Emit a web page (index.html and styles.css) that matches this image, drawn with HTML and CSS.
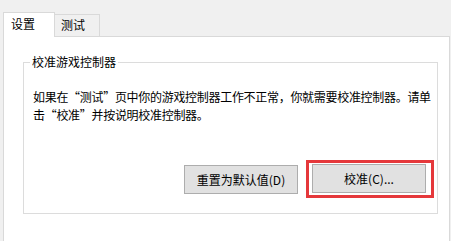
FILE: index.html
```html
<!DOCTYPE html>
<html lang="zh-CN">
<head>
<meta charset="utf-8">
<link rel="stylesheet" href="styles.css">
</head>
<body>
<div class="window">
  <div class="tabs">
    <div class="tab active">设置</div>
    <div class="tab">测试</div>
  </div>
  <div class="panel">
    <fieldset class="group">
      <legend class="group-title">校准游戏控制器</legend>
      <p class="desc">如果在“测试”页中你的游戏控制器工作不正常，你就需要校准控制器。请单<br>击“校准”并按说明校准控制器。</p>
      <div class="actions">
        <button class="btn btn-reset" type="button">重置为默认值(D)</button>
        <div class="highlight">
          <button class="btn" type="button">校准(C)...</button>
        </div>
      </div>
    </fieldset>
  </div>
</div>
</body>
</html>
```
FILE: styles.css
```css
html, body {
  margin: 0;
  padding: 0;
  background: #f0f0f0;
  width: 451px;
  height: 241px;
  overflow: hidden;
}
body {
  font-family: "Noto Sans CJK SC", "Microsoft YaHei", sans-serif;
  font-size: 12px;
  color: #000;
}
.window {
  padding-top: 12px;
}
.tabs {
  display: flex;
  align-items: flex-end;
  margin-left: 3px;
  height: 24px;
}
.tab {
  box-sizing: border-box;
  height: 22px;
  width: 45px;
  border: 1px solid #d9d9d9;
  border-left: none;
  border-bottom: none;
  background: #f0f0f0;
  padding-left: 6px;
  line-height: 20px;
}
.tab.active {
  width: 52px;
  height: 25px;
  border-left: 1px solid #d9d9d9;
  background: #fff;
  padding-left: 7px;
  line-height: 22px;
  margin-bottom: -1px;
  position: relative;
  z-index: 1;
}
.panel {
  box-sizing: border-box;
  margin-left: 3px;
  width: 447px;
  height: 205px;
  background: #fff;
  border: 1px solid #d9d9d9;
  border-bottom: none;
}
.group {
  margin: 17px 11px 0 19px;
  padding: 0 0 15px 0;
  border: 1px solid #dcdcdc;
  min-width: 0;
}
.group-title {
  margin-left: 6px;
  padding: 0 2px;
  line-height: 16px;
}
.desc {
  margin: 18px 0 0 9px;
  line-height: 18px;
  white-space: nowrap;
  letter-spacing: -0.3px;
}
.actions {
  display: flex;
  justify-content: flex-end;
  align-items: center;
  margin-top: 36px;
  margin-right: 3px;
}
.btn {
  box-sizing: border-box;
  width: 114px;
  height: 29px;
  background: #e1e1e1;
  border: 1px solid #adadad;
  border-radius: 0;
  font-family: inherit;
  font-size: 12px;
  color: #000;
  padding: 0;
}
.btn-reset {
  margin-right: 8px;
}
.highlight {
  border: 3px solid #e5383b;
  padding: 1px 5px 2px 3px;
  display: flex;
}
```
